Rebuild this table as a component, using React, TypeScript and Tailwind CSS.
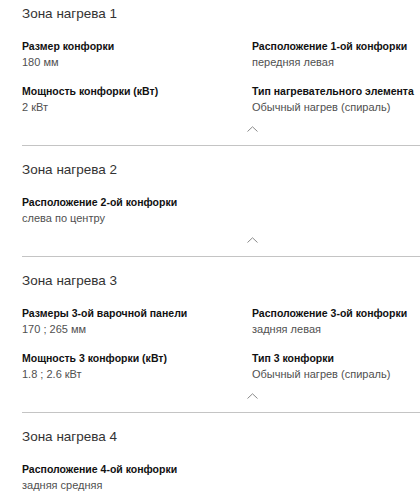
type Spec = { label: string; value: string };

type Zone = { title: string; specs: Spec[] };

const ZONES: Zone[] = [
  {
    title: "Зона нагрева 1",
    specs: [
      { label: "Размер конфорки", value: "180 мм" },
      { label: "Расположение 1-ой конфорки", value: "передняя левая" },
      { label: "Мощность конфорки (кВт)", value: "2 кВт" },
      { label: "Тип нагревательного элемента", value: "Обычный нагрев (спираль)" },
    ],
  },
  {
    title: "Зона нагрева 2",
    specs: [{ label: "Расположение 2-ой конфорки", value: "слева по центру" }],
  },
  {
    title: "Зона нагрева 3",
    specs: [
      { label: "Размеры 3-ой варочной панели", value: "170 ; 265 мм" },
      { label: "Расположение 3-ой конфорки", value: "задняя левая" },
      { label: "Мощность 3 конфорки (кВт)", value: "1.8 ; 2.6 кВт" },
      { label: "Тип 3 конфорки", value: "Обычный нагрев (спираль)" },
    ],
  },
  {
    title: "Зона нагрева 4",
    specs: [{ label: "Расположение 4-ой конфорки", value: "задняя средняя" }],
  },
];

function ChevronUp() {
  return (
    <svg width="11" height="6" viewBox="0 0 11 6" fill="none" aria-hidden="true">
      <path d="M0.5 5.5 L5.5 0.8 L10.5 5.5" stroke="#8a8a8a" strokeWidth="1" />
    </svg>
  );
}

function ZoneBlock({ zone, first }: { zone: Zone; first: boolean }) {
  return (
    <section
      className={`border-b border-[#c4c4c4] ${first ? "pt-1" : "pt-[14px]"}`}
    >
      <h2 className="text-[13.5px] font-normal leading-5 text-[#333]">
        {zone.title}
      </h2>
      <div className="mt-[15px] grid grid-cols-2 gap-y-[13px]">
        {zone.specs.map((spec) => (
          <div key={spec.label}>
            <div className="text-[10.5px] font-bold leading-[15px] text-[#111]">
              {spec.label}
            </div>
            <div className="text-[11px] leading-[17px] text-[#505050]">
              {spec.value}
            </div>
          </div>
        ))}
      </div>
      <div className="mt-[10px] flex justify-center pb-[13px]">
        <ChevronUp />
      </div>
    </section>
  );
}

export default function App() {
  return (
    <div
      className="h-[500px] w-[420px] overflow-hidden bg-white"
      style={{ fontFamily: '"Liberation Sans", Arial, sans-serif' }}
    >
      <div className="ml-[22px] w-[460px]">
        {ZONES.map((zone, i) => (
          <ZoneBlock key={zone.title} zone={zone} first={i === 0} />
        ))}
      </div>
    </div>
  );
}
